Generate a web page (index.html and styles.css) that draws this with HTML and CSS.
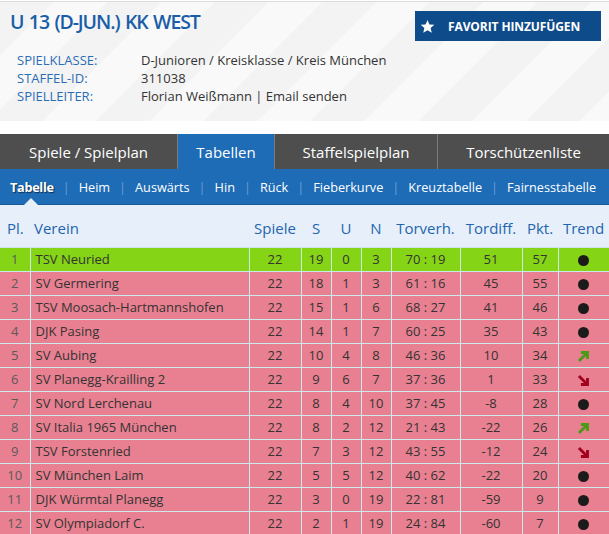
FILE: index.html
```html
<!DOCTYPE html>
<html lang="de">
<head>
<meta charset="utf-8">
<title>U 13 (D-Jun.) KK West</title>
<link rel="stylesheet" href="styles.css">
</head>
<body>
<header class="head">
  <div class="head-main">
    <h1 class="title">U 13 (D-JUN.) KK WEST</h1>
    <dl class="info">
      <dt>SPIELKLASSE:</dt><dd>D-Junioren / Kreisklasse / Kreis München</dd>
      <dt>STAFFEL-ID:</dt><dd>311038</dd>
      <dt>SPIELLEITER:</dt><dd>Florian Weißmann | Email senden</dd>
    </dl>
  </div>
  <button class="fav"><svg class="star" width="15" height="15" viewBox="0 0 24 24"><path d="M12 1.5l3.1 7.2 7.8.6-5.9 5.1 1.8 7.6L12 17.9 5.2 22l1.8-7.6L1.1 9.3l7.8-.6z" fill="#fff"/></svg><span>FAVORIT HINZUFÜGEN</span></button>
</header>

<nav class="tabs">
  <a class="tab t1">Spiele / Spielplan</a>
  <a class="tab t2 active">Tabellen</a>
  <a class="tab t3">Staffelspielplan</a>
  <a class="tab t4">Torschützenliste</a>
</nav>

<nav class="subnav">
  <a class="sub current">Tabelle</a><span class="sep">|</span>
  <a class="sub">Heim</a><span class="sep">|</span>
  <a class="sub">Auswärts</a><span class="sep">|</span>
  <a class="sub">Hin</a><span class="sep">|</span>
  <a class="sub">Rück</a><span class="sep">|</span>
  <a class="sub">Fieberkurve</a><span class="sep">|</span>
  <a class="sub">Kreuztabelle</a><span class="sep">|</span>
  <a class="sub">Fairnesstabelle</a>
  <span class="pointer"></span>
</nav>

<table class="table">
  <colgroup>
    <col class="c-pl"><col class="c-ver"><col class="c-sp"><col class="c-s"><col class="c-u"><col class="c-n"><col class="c-tv"><col class="c-td"><col class="c-pk"><col class="c-tr">
  </colgroup>
  <thead>
    <tr><th class="pl">Pl.</th><th class="ver">Verein</th><th>Spiele</th><th>S</th><th>U</th><th>N</th><th>Torverh.</th><th>Tordiff.</th><th>Pkt.</th><th>Trend</th></tr>
  </thead>
  <tbody>
    <tr class="up"><td class="pl">1</td><td class="ver">TSV Neuried</td><td>22</td><td>19</td><td>0</td><td>3</td><td>70 : 19</td><td>51</td><td>57</td><td><span class="dot"></span></td></tr>
    <tr class="down"><td class="pl">2</td><td class="ver">SV Germering</td><td>22</td><td>18</td><td>1</td><td>3</td><td>61 : 16</td><td>45</td><td>55</td><td><span class="dot"></span></td></tr>
    <tr class="down"><td class="pl">3</td><td class="ver">TSV Moosach-Hartmannshofen</td><td>22</td><td>15</td><td>1</td><td>6</td><td>68 : 27</td><td>41</td><td>46</td><td><span class="dot"></span></td></tr>
    <tr class="down"><td class="pl">4</td><td class="ver">DJK Pasing</td><td>22</td><td>14</td><td>1</td><td>7</td><td>60 : 25</td><td>35</td><td>43</td><td><span class="dot"></span></td></tr>
    <tr class="down"><td class="pl">5</td><td class="ver">SV Aubing</td><td>22</td><td>10</td><td>4</td><td>8</td><td>46 : 36</td><td>10</td><td>34</td><td><svg class="arrow" width="13" height="13" viewBox="0 0 12 12"><path d="M1.8 10.2L9.6 2.4M3.6 2.3H9.7V8.4" fill="none" stroke="#4b9a17" stroke-width="2.6"/></svg></td></tr>
    <tr class="down"><td class="pl">6</td><td class="ver">SV Planegg-Krailling 2</td><td>22</td><td>9</td><td>6</td><td>7</td><td>37 : 36</td><td>1</td><td>33</td><td><svg class="arrow" width="13" height="13" viewBox="0 0 12 12"><path d="M1.8 1.8L9.6 9.6M3.6 9.7H9.7V3.6" fill="none" stroke="#a3001d" stroke-width="2.6"/></svg></td></tr>
    <tr class="down"><td class="pl">7</td><td class="ver">SV Nord Lerchenau</td><td>22</td><td>8</td><td>4</td><td>10</td><td>37 : 45</td><td>-8</td><td>28</td><td><span class="dot"></span></td></tr>
    <tr class="down"><td class="pl">8</td><td class="ver">SV Italia 1965 München</td><td>22</td><td>8</td><td>2</td><td>12</td><td>21 : 43</td><td>-22</td><td>26</td><td><svg class="arrow" width="13" height="13" viewBox="0 0 12 12"><path d="M1.8 10.2L9.6 2.4M3.6 2.3H9.7V8.4" fill="none" stroke="#4b9a17" stroke-width="2.6"/></svg></td></tr>
    <tr class="down"><td class="pl">9</td><td class="ver">TSV Forstenried</td><td>22</td><td>7</td><td>3</td><td>12</td><td>43 : 55</td><td>-12</td><td>24</td><td><svg class="arrow" width="13" height="13" viewBox="0 0 12 12"><path d="M1.8 1.8L9.6 9.6M3.6 9.7H9.7V3.6" fill="none" stroke="#a3001d" stroke-width="2.6"/></svg></td></tr>
    <tr class="down"><td class="pl">10</td><td class="ver">SV München Laim</td><td>22</td><td>5</td><td>5</td><td>12</td><td>40 : 62</td><td>-22</td><td>20</td><td><span class="dot"></span></td></tr>
    <tr class="down"><td class="pl">11</td><td class="ver">DJK Würmtal Planegg</td><td>22</td><td>3</td><td>0</td><td>19</td><td>22 : 81</td><td>-59</td><td>9</td><td><span class="dot"></span></td></tr>
    <tr class="down"><td class="pl">12</td><td class="ver">SV Olympiadorf C.</td><td>22</td><td>2</td><td>1</td><td>19</td><td>24 : 84</td><td>-60</td><td>7</td><td><span class="dot"></span></td></tr>
  </tbody>
</table>
</body>
</html>
```
FILE: styles.css
```css
* { box-sizing: border-box; }
html, body { margin: 0; padding: 0; }
body {
  width: 609px;
  font-family: "Open Sans", "DejaVu Sans", sans-serif;
  background: #fff;
  color: #333;
  overflow: hidden;
}

.head {
  display: flex;
  justify-content: space-between;
  align-items: flex-start;
  height: 120px;
  margin-top: 1px;
  border-top: 1px solid #dcdcdc;
  padding: 0 8px 0 10px;
  background: repeating-linear-gradient(135deg, #f3f3f4 0 38px, #f9f9f9 38px 76px);
}
.title {
  margin: 7px 0 0;
  font-size: 19.5px;
  line-height: 26px;
  font-weight: 600;
  color: #1a5ea8;
  letter-spacing: -1.1px;
  word-spacing: 1.5px;
}
.info {
  display: grid;
  grid-template-columns: 124px auto;
  margin: 16px 0 0 7px;
  font-size: 13px;
  line-height: 18px;
}
.info dt { color: #2a6db5; margin: 0; }
.info dd { color: #333; margin: 0; }

.fav {
  display: flex;
  align-items: center;
  width: 186px;
  height: 30px;
  margin-top: 9px;
  padding: 0 0 0 5px;
  border: 0;
  background: #0e4b8b;
  color: #fff;
  font-family: "Open Sans", sans-serif;
  font-weight: 700;
  font-size: 12px;
  letter-spacing: -0.1px;
  cursor: pointer;
}
.star { margin: 0 13px 0 0; flex: none; }

.tabs {
  display: flex;
  margin-top: 13px;
  height: 35px;
  background: #4e4e4e;
}
.tab {
  display: flex;
  align-items: center;
  justify-content: center;
  color: #fff;
  font-size: 15px;
  border-right: 1px solid #7a7a7a;
}
.t1 { width: 178px; }
.t2 { width: 97px; }
.t3 { width: 163px; }
.t4 { flex: 1; border-right: 0; }
.tab.active { background: #1e6bb6; }

.subnav {
  position: relative;
  display: flex;
  align-items: center;
  height: 36px;
  padding-left: 10px;
  background: #1e6bb6;
  border-bottom: 1px solid #18599a;
  font-size: 12.7px;
  color: #fff;
  white-space: nowrap;
}
.sub { color: #fff; }
.sub.current { font-weight: 700; letter-spacing: -0.3px; text-shadow: 1px 1px 1px rgba(0,0,0,0.55); }
.sep { color: rgba(255,255,255,0.35); margin: 0 9px; }
.pointer {
  position: absolute;
  left: 24px;
  bottom: -1px;
  width: 0; height: 0;
  border-left: 7px solid transparent;
  border-right: 7px solid transparent;
  border-bottom: 7px solid #e7f0fa;
}

.table {
  width: 609px;
  border-collapse: collapse;
  table-layout: fixed;
  font-size: 13px;
}
.c-pl { width: 30px; }
.c-ver { width: 219px; }
.c-sp { width: 52px; }
.c-s { width: 30px; }
.c-u { width: 30px; }
.c-n { width: 30px; }
.c-tv { width: 69px; }
.c-td { width: 62px; }
.c-pk { width: 36px; }
.c-tr { width: 51px; }

.table thead th {
  height: 42px;
  padding: 4px 0 0;
  background: #e7f0fa;
  color: #1e64ae;
  font-weight: 400;
  font-size: 15px;
  text-align: center;
  vertical-align: middle;
  border-bottom: 1px solid #cfe3ef;
}
.table thead th.pl { text-align: left; padding-left: 7px; }
.table thead th.ver { text-align: left; padding-left: 4px; }

.table td {
  height: 24px;
  padding: 0;
  text-align: center;
  vertical-align: middle;
  border: 1px solid #cdeaea;
  color: #333;
}
.table tbody tr:first-child td { border-top: 0; }
.table td:first-child { border-left: 0; }
.table td:last-child { border-right: 0; }
.table td.pl { color: #5a5a5a; }
.table td.ver { text-align: left; padding-left: 5px; }
tr.up td { background: #85d415; }
tr.down td { background: #e98091; }

.dot {
  display: inline-block;
  width: 11px;
  height: 11px;
  border-radius: 50%;
  background: #1b1b1b;
  vertical-align: middle;
}
.arrow { display: inline-block; vertical-align: middle; }
```
